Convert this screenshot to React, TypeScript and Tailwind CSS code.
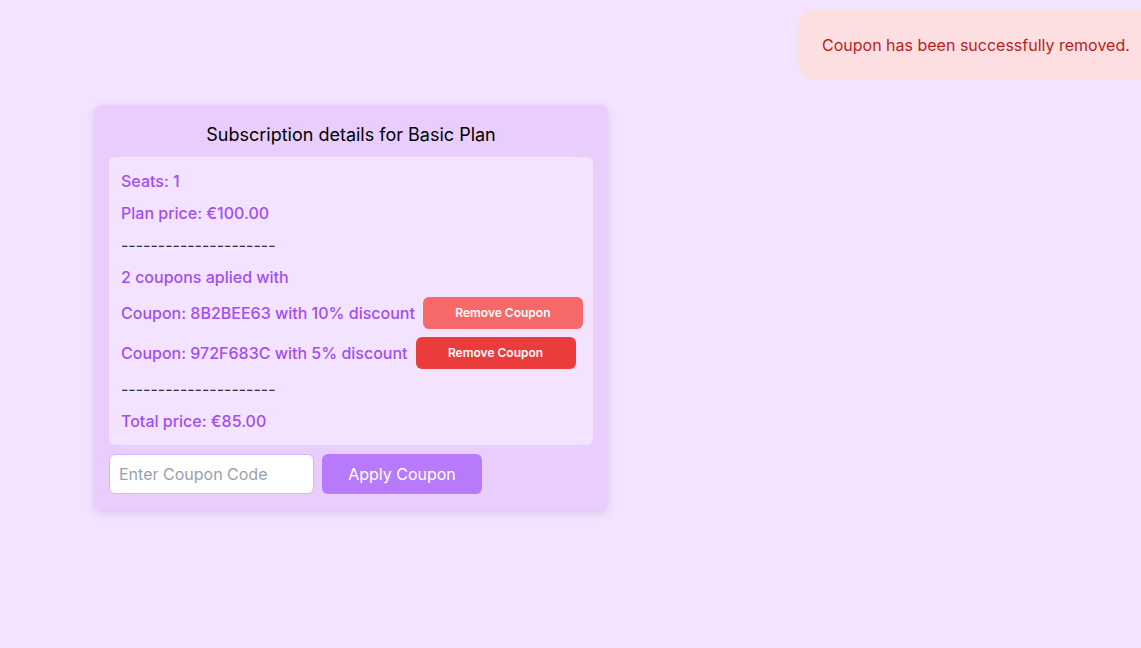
import { useState } from "react";

type Coupon = { code: string; discount: number; tone: string };

const coupons: Coupon[] = [
  { code: "8B2BEE63", discount: 10, tone: "bg-[#f76868]" },
  { code: "972F683C", discount: 5, tone: "bg-[#ec3b3b]" },
];

const App = () => {
  const [code, setCode] = useState("");

  return (
    <main
      className="relative min-h-screen bg-[#f3e3ff] text-base"
      style={{ fontFamily: "Inter, 'Noto Sans', sans-serif" }}
    >
      <div className="absolute left-[798px] top-[10px] flex h-[70px] w-[380px] items-center rounded-2xl bg-[#fedfe1] px-6 text-base text-[#b91c1c]">
        Coupon has been successfully removed.
      </div>

      <div className="pl-[94px] pt-[105px]">
        <section className="w-[514px] rounded-lg bg-[#e8cdfd] px-[15px] pb-4 pt-4 shadow-[0_3px_8px_rgba(100,60,140,0.18)]">
          <h1 className="mb-2 text-center text-lg leading-7 text-black">
            Subscription details for Basic Plan
          </h1>

          <div className="flex flex-col gap-2 rounded-md bg-[#f3e3ff] p-3 font-medium leading-6 text-[#a14ef2]">
            <p>Seats: 1</p>
            <p>Plan price: €100.00</p>
            <p className="font-normal text-[#333]">---------------------</p>
            <p>2 coupons aplied with</p>
            {coupons.map((c) => (
              <div className="flex h-8 items-center gap-2 whitespace-nowrap" key={c.code}>
                <span>
                  Coupon: {c.code} with {c.discount}% discount
                </span>
                <button
                  type="button"
                  className={`h-8 w-40 shrink-0 rounded-md ${c.tone} text-xs font-semibold text-white`}
                >
                  Remove Coupon
                </button>
              </div>
            ))}
            <p className="font-normal text-[#333]">---------------------</p>
            <p>Total price: €85.00</p>
          </div>

          <div className="mt-[9px] flex gap-2">
            <input
              value={code}
              onChange={(e) => setCode(e.target.value)}
              placeholder="Enter Coupon Code"
              className="h-10 w-[205px] rounded-md border border-[#d8b4fe] bg-white px-[9px] text-base text-gray-700 placeholder:text-[#9aa0ab] focus:outline-none"
            />
            <button
              type="button"
              className="h-10 w-40 rounded-md bg-[#b77afb] text-base text-white"
            >
              Apply Coupon
            </button>
          </div>
        </section>
      </div>
    </main>
  );
};

export default App;
